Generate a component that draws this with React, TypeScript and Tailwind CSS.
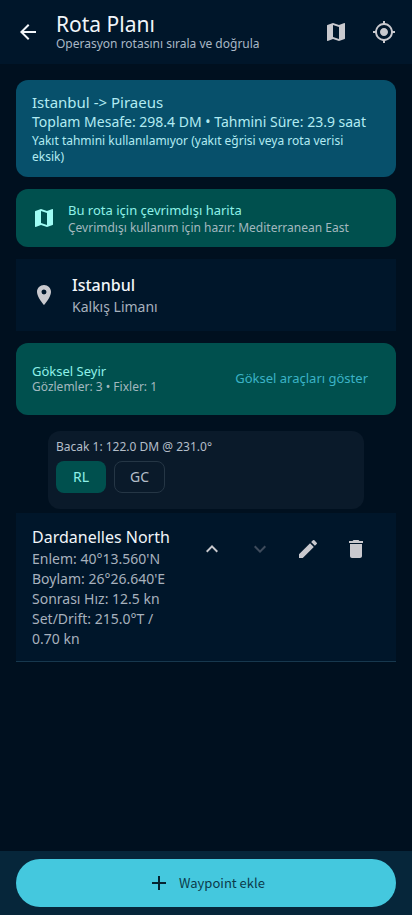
import type { ReactNode } from "react";
import {
  MdAdd,
  MdArrowBack,
  MdDelete,
  MdEdit,
  MdKeyboardArrowDown,
  MdKeyboardArrowUp,
  MdLocationOn,
  MdMyLocation,
} from "react-icons/md";

const waypoint = {
  name: "Dardanelles North",
  details: [
    "Enlem: 40°13.560'N",
    "Boylam: 26°26.640'E",
    "Sonrası Hız: 12.5 kn",
    "Set/Drift: 215.0°T / 0.70 kn",
  ],
};

function MapIcon({ className }: { className?: string }) {
  return (
    <svg
      viewBox="0 0 24 24"
      fill="currentColor"
      aria-hidden="true"
      className={className}
    >
      <path d="M20.5 3l-.16.03L15 5.1 9 3 3.36 4.9c-.21.07-.36.25-.36.48V20.5c0 .28.22.5.5.5l.16-.03L9 18.9l6 2.1 5.64-1.9c.21-.07.36-.25.36-.48V3.5c0-.28-.22-.5-.5-.5zM15 19l-6-2.11V5l6 2.11V19z" />
    </svg>
  );
}

function IconButton({
  label,
  disabled,
  children,
}: {
  label: string;
  disabled?: boolean;
  children: ReactNode;
}) {
  return (
    <button
      type="button"
      aria-label={label}
      disabled={disabled}
      className="flex size-12 shrink-0 items-center justify-center text-2xl text-[#c9c9ce] disabled:text-[#3e4b5c]"
    >
      {children}
    </button>
  );
}

function Header() {
  return (
    <header className="flex h-16 items-center bg-[#00162a] px-1">
      <button
        type="button"
        aria-label="Geri"
        className="flex size-12 shrink-0 items-center justify-center text-2xl text-[#f1f5f9]"
      >
        <MdArrowBack />
      </button>
      <div className="min-w-0 flex-1 pl-1">
        <h1 className="text-[21px] leading-6 text-[#f1f5f9]">Rota Planı</h1>
        <p className="text-xs leading-4 text-[#a9b8c6]">
          Operasyon rotasını sırala ve doğrula
        </p>
      </div>
      <IconButton label="Harita">
        <MapIcon className="size-6" />
      </IconButton>
      <IconButton label="Konumum">
        <MdMyLocation />
      </IconButton>
    </header>
  );
}

function RouteSummary() {
  return (
    <section className="rounded-xl bg-[#07506b] px-4 py-3 text-[#b2ebf2]">
      <h2 className="text-[15px] leading-5">Istanbul -&gt; Piraeus</h2>
      <p className="text-sm leading-5">
        Toplam Mesafe: 298.4 DM • Tahmini Süre: 23.9 saat
      </p>
      <p className="mt-px pr-4 text-xs leading-4">
        Yakıt tahmini kullanılamıyor (yakıt eğrisi veya rota verisi eksik)
      </p>
    </section>
  );
}

function OfflineMap() {
  return (
    <section className="mt-3 flex items-center gap-3 rounded-xl bg-[#00504e] px-4 py-[11px]">
      <MapIcon className="size-6 shrink-0 text-[#a0fcf4]" />
      <div>
        <h2 className="text-[13px] leading-5 text-[#8ff0e8]">
          Bu rota için çevrimdışı harita
        </h2>
        <p className="text-xs leading-4 text-[#a3b8bf]">
          Çevrimdışı kullanım için hazır: Mediterranean East
        </p>
      </div>
    </section>
  );
}

function DeparturePort() {
  return (
    <section className="mt-3 flex h-18 items-center gap-4 bg-[#00162a] px-4">
      <MdLocationOn className="shrink-0 text-2xl text-[#c9c9ce]" />
      <div>
        <h2 className="text-base leading-6 font-medium text-[#f1f5f9]">
          Istanbul
        </h2>
        <p className="text-sm leading-5 text-[#a7b1bd]">Kalkış Limanı</p>
      </div>
    </section>
  );
}

function CelestialNav() {
  return (
    <section className="mt-3 flex h-18 items-center justify-between rounded-xl bg-[#00504e] px-4">
      <div>
        <h2 className="text-[13px] leading-4 text-[#8ff0e8]">Göksel Seyir</h2>
        <p className="text-xs leading-4 text-[#a3b8bf]">
          Gözlemler: 3 • Fixler: 1
        </p>
      </div>
      <button type="button" className="h-12 px-3 text-[13px] text-[#3bb3c6]">
        Göksel araçları göster
      </button>
    </section>
  );
}

function Leg() {
  return (
    <section className="mx-8 mt-4 rounded-xl bg-[#0a1a2a] px-2 pt-2 pb-4">
      <p className="text-xs leading-4 text-[#b4bec9]">
        Bacak 1: 122.0 DM @ 231.0°
      </p>
      <div className="mt-1.5 flex gap-2">
        <button
          type="button"
          aria-pressed="true"
          className="h-8 min-w-[50px] rounded-lg bg-[#00504e] px-4 text-sm text-[#8ff0e8]"
        >
          RL
        </button>
        <button
          type="button"
          aria-pressed="false"
          className="h-8 min-w-[50px] rounded-lg border border-[#253645] px-[15px] text-sm text-[#b4bec9]"
        >
          GC
        </button>
      </div>
    </section>
  );
}

function Waypoint() {
  return (
    <section className="mt-1 flex items-start border-b border-[#17384e] bg-[#00162a] px-4 py-3">
      <div className="min-w-0 flex-1">
        <h2 className="text-base leading-6 text-[#f1f5f9]">{waypoint.name}</h2>
        <ul className="pr-4 text-sm leading-5 text-[#a7b1bd]">
          {waypoint.details.map((line) => (
            <li key={line}>{line}</li>
          ))}
        </ul>
      </div>
      <IconButton label="Yukarı taşı">
        <MdKeyboardArrowUp />
      </IconButton>
      <IconButton label="Aşağı taşı" disabled>
        <MdKeyboardArrowDown />
      </IconButton>
      <IconButton label="Düzenle">
        <MdEdit />
      </IconButton>
      <IconButton label="Sil">
        <MdDelete />
      </IconButton>
    </section>
  );
}

export default function App() {
  return (
    <div className="flex min-h-screen flex-col bg-[#00101f] font-['Noto_Sans',sans-serif]">
      <Header />
      <main className="flex-1 p-4">
        <RouteSummary />
        <OfflineMap />
        <DeparturePort />
        <CelestialNav />
        <Leg />
        <Waypoint />
      </main>
      <footer className="sticky bottom-0 bg-[#06263a] px-4 py-2">
        <button
          type="button"
          className="flex h-12 w-full items-center justify-center gap-2 rounded-full bg-[#44c8de] font-['Noto_Sans_CJK_SC',sans-serif] text-[13px] text-[#0b3a4a]"
        >
          <MdAdd className="text-2xl text-[#062330]" />
          Waypoint ekle
        </button>
      </footer>
    </div>
  );
}
